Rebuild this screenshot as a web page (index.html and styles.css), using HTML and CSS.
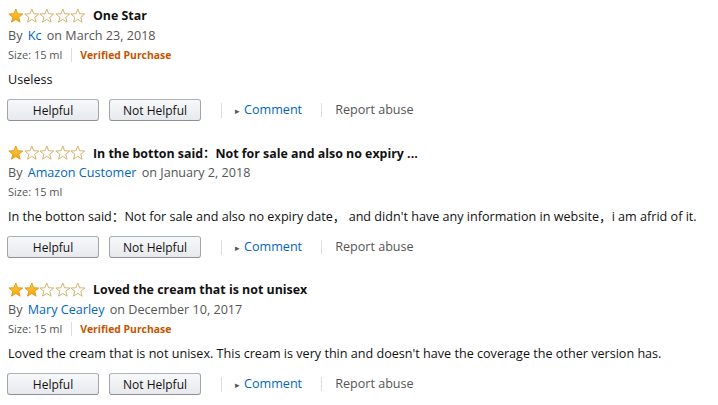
FILE: index.html
```html
<!DOCTYPE html>
<html lang="en">
<head>
    <meta charset="UTF-8">
    <meta name="viewport" content="width=device-width, initial-scale=1.0">
    <title>Customer Reviews</title>
    <link rel="stylesheet" href="styles.css">
</head>
<body>
    <!-- Bentuk bintang dipakai ulang -->
    <svg class="defs" width="0" height="0">
        <defs>
            <linearGradient id="gold" x1="0" y1="0" x2="0" y2="1">
                <stop offset="0" stop-color="#ffce3d"/>
                <stop offset="1" stop-color="#f3a30f"/>
            </linearGradient>
            <symbol id="star" viewBox="0 0 16 16">
                <path d="M8 1 L9.88 5.91 L15.13 6.18 L11.04 9.49 L12.41 14.57 L8 11.7 L3.59 14.57 L4.96 9.49 L0.87 6.18 L6.12 5.91 Z"/>
            </symbol>
        </defs>
    </svg>

    <div class="review">
        <div class="review-title">
            <span class="stars">
                <svg class="star on"><use href="#star"/></svg>
                <svg class="star"><use href="#star"/></svg>
                <svg class="star"><use href="#star"/></svg>
                <svg class="star"><use href="#star"/></svg>
                <svg class="star"><use href="#star"/></svg>
            </span>
            <b>One Star</b>
        </div>
        <div class="byline">By <a href="#">Kc</a> on March 23, 2018</div>
        <div class="meta">Size: 15 ml <span class="verified">Verified Purchase</span></div>
        <p class="body">Useless</p>
        <div class="actions">
            <button>Helpful</button>
            <button>Not Helpful</button>
            <a class="comment" href="#"><span class="arrow">&#9656;</span>Comment</a>
            <span class="report">Report abuse</span>
        </div>
    </div>

    <div class="review">
        <div class="review-title">
            <span class="stars">
                <svg class="star on"><use href="#star"/></svg>
                <svg class="star"><use href="#star"/></svg>
                <svg class="star"><use href="#star"/></svg>
                <svg class="star"><use href="#star"/></svg>
                <svg class="star"><use href="#star"/></svg>
            </span>
            <b>In the botton said：Not for sale and also no expiry ...</b>
        </div>
        <div class="byline">By <a href="#">Amazon Customer</a> on January 2, 2018</div>
        <div class="meta">Size: 15 ml</div>
        <p class="body">In the botton said：Not for sale and also no expiry date， and didn't have any information in website，i am afrid of it.</p>
        <div class="actions">
            <button>Helpful</button>
            <button>Not Helpful</button>
            <a class="comment" href="#"><span class="arrow">&#9656;</span>Comment</a>
            <span class="report">Report abuse</span>
        </div>
    </div>

    <div class="review">
        <div class="review-title">
            <span class="stars">
                <svg class="star on"><use href="#star"/></svg>
                <svg class="star on"><use href="#star"/></svg>
                <svg class="star"><use href="#star"/></svg>
                <svg class="star"><use href="#star"/></svg>
                <svg class="star"><use href="#star"/></svg>
            </span>
            <b>Loved the cream that is not unisex</b>
        </div>
        <div class="byline">By <a href="#">Mary Cearley</a> on December 10, 2017</div>
        <div class="meta">Size: 15 ml <span class="verified">Verified Purchase</span></div>
        <p class="body">Loved the cream that is not unisex. This cream is very thin and doesn't have the coverage the other version has.</p>
        <div class="actions">
            <button>Helpful</button>
            <button>Not Helpful</button>
            <a class="comment" href="#"><span class="arrow">&#9656;</span>Comment</a>
            <span class="report">Report abuse</span>
        </div>
    </div>
</body>
</html>
```

FILE: styles.css
```css
body {
    margin: 0;
    padding: 6px 8px 0 8px;
    font-family: "Open Sans", "Noto Sans CJK SC", sans-serif;
    font-size: 12.6px;
    color: #111;
    background-color: white;
}

.defs {
    position: absolute;
}

.review {
    margin-bottom: 22px;
}

.review-title {
    display: flex;
    align-items: center;
    height: 19px;
}

.review-title b {
    font-size: 12.4px;
    font-weight: 700;
    margin-left: 7px;
}

.stars {
    display: flex;
}

.star {
    width: 15.6px;
    height: 15.6px;
    fill: white;
    stroke: #d4b06a;
    stroke-width: 1;
}

.star.on {
    fill: url(#gold);
    stroke: #e29a1b;
}

.byline {
    margin-top: 1px;
    line-height: 19px;
    color: #555;
}

.byline a {
    color: #0066c0;
    text-decoration: none;
    margin: 0 2px;
}

.meta {
    line-height: 18px;
    margin-top: 1px;
    font-size: 11px;
    color: #555;
}

.verified {
    color: #c45500;
    font-size: 10.4px;
    font-weight: 700;
    margin-left: 6px;
    padding-left: 8px;
    border-left: 1px solid #ddd;
}

.body {
    margin: 6px 0 0 0;
    line-height: 19px;
}

.actions {
    display: flex;
    align-items: center;
    margin-top: 10px;
    margin-left: -1px;
}

button {
    width: 92px;
    height: 22px;
    margin-right: 10px;
    padding: 0;
    font-family: inherit;
    font-size: 12px;
    color: #111;
    border: 1px solid #adb1b8;
    border-color: #adb1b8 #a2a6ac #8d9096;
    border-radius: 3px;
    background: linear-gradient(to bottom, #f7f8fa, #e7e9ec);
    cursor: pointer;
}

.comment {
    color: #0066c0;
    text-decoration: none;
    margin-left: 10px;
    padding-left: 13px;
    border-left: 1px solid #ddd;
    line-height: 14px;
}

.arrow {
    color: #555;
    font-size: 9px;
    margin-right: 4px;
}

.report {
    color: #555;
    margin-left: 19px;
    padding-left: 13px;
    border-left: 1px solid #ddd;
    line-height: 14px;
}
```
